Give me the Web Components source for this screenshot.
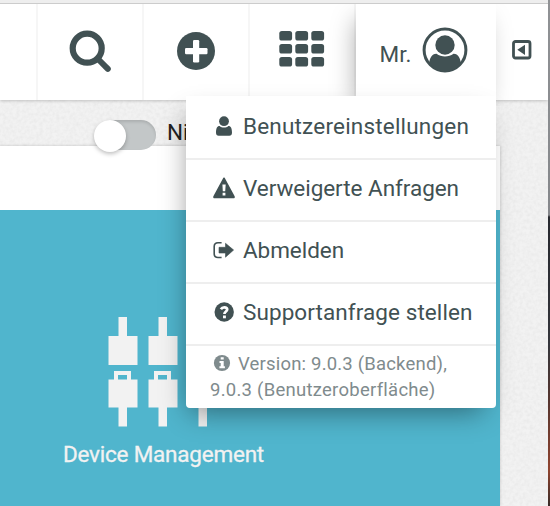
<!DOCTYPE html>
<html lang="de">
<head>
<meta charset="utf-8">
<title>Benutzermenü</title>
<style>
html, body { margin: 0; width: 550px; height: 506px; overflow: hidden; }
body { font-family: Roboto, "Noto Sans", sans-serif; color: #415153; }
</style>
</head>
<body>
<app-shell></app-shell>
<script>
const define = (name, html, ready) => {
  const template = document.createElement('template');
  template.innerHTML = html;
  customElements.define(name, class extends HTMLElement {
    constructor() {
      super();
      this.attachShadow({ mode: 'open' }).append(template.content.cloneNode(true));
    }
    connectedCallback() { if (ready) ready(this); }
  });
};

const icons = {
  search: ['0 0 44 44', '<circle cx="18.2" cy="18.2" r="14.5" fill="none" stroke="currentColor" stroke-width="6.2"/><path d="M29 29L38.8 38.8" stroke="currentColor" stroke-width="6" stroke-linecap="round"/>'],
  plus: ['0 0 38 38', '<circle cx="19" cy="19" r="19" fill="currentColor"/><rect x="8" y="16" width="22.500" height="6.200" rx="1.200" fill="#fff"/><rect x="16" y="8" width="6.200" height="22.500" rx="1.200" fill="#fff"/>'],
  grid: ['0 0 46 36', [0, 16, 32].map(x => [0, 13, 26].map(y => `<rect x="${x + .3}" y="${y}" width="12.800" height="9.500" rx="2.600" fill="currentColor"/>`).join('')).join('')],
  avatar: ['0 0 46 46', '<circle cx="23" cy="23" r="20.900" fill="none" stroke="currentColor" stroke-width="3"/><circle cx="23" cy="18" r="9.700" fill="currentColor"/><path d="M7 37C7.500 31 10 26.500 14.500 26.700C19.500 30.300 26.500 30.300 31.500 26.700C36 26.500 38.500 31 39 37A21 21 0 0 1 7 37Z" fill="currentColor"/>'],
  collapse: ['0 0 20 20', '<rect x="1.500" y="1.500" width="16.500" height="16.500" rx="2" fill="none" stroke="currentColor" stroke-width="2.800"/><path d="M13 4.700V15L5.300 9.800Z" fill="currentColor"/>'],
  user: ['0 0 24 24', '<circle cx="12" cy="7.200" r="4.900" fill="currentColor"/><path d="M7.600 11.900C9.800 13.900 14.200 13.900 16.400 11.900C19 11.900 20 14.500 20 18.500C20 20.600 19 21.700 17.300 21.700H6.700C5 21.700 4 20.600 4 18.500C4 14.500 5 11.900 7.600 11.900Z" fill="currentColor"/>'],
  warning: ['0 0 24 24', '<path d="M12 2.200L22 20.600V21.500H2V20.600Z" fill="currentColor" stroke="currentColor" stroke-width="1.500" stroke-linejoin="round"/><path d="M10.400 8.500H13.700L13.200 15.300H10.800ZM10.600 16.700H13.400V19.500H10.600Z" fill="#fff"/>'],
  exit: ['0 0 24 24', '<path d="M9.600 4.700H6Q2.200 4.700 2.200 8.500V15.700Q2.200 19.500 6 19.500H9.600" fill="none" stroke="currentColor" stroke-width="1.600"/><path d="M7 9.300H13.500V5.300L21.600 12L13.500 19.200V15H7Z" fill="currentColor" stroke="currentColor" stroke-width=".6" stroke-linejoin="round"/>'],
  help: ['0 0 24 24', '<circle cx="12.200" cy="12" r="9.700" fill="currentColor"/><path d="M8.900 9.200Q10 7.300 12.300 7.300Q15.200 7.300 15.200 9.500C15.200 11.500 12.400 11.500 12.400 14.100" fill="none" stroke="#fff" stroke-width="2.700"/><path d="M11 15.500h2.900v2.800H11z" fill="#fff"/>'],
  info: ['0 0 18 18', '<circle cx="9" cy="9" r="8.100" fill="currentColor"/><path d="M7.700 3.200h3v2.400h-3zM6.500 7h4.200v5.300h1.200v2H6.400v-2h1.300V9H6.500z" fill="#fff"/>'],
  device: ['0 0 110 110', [0, 40, 80].map(x => `<g transform="translate(${x})"><path d="M10.500 0h8.500v19h10.500v29H.5V19h10z"/><path fill-rule="evenodd" d="M6 54h17v8.500h6.500V90.500H19V109.500h-8.500V90.500H.5V62.500H6zM10 58v4.500h9V58z"/></g>`).join('')]
};

define('ui-icon', `<style>:host{display:block;flex:none}svg{display:block;width:100%;height:100%;fill:currentColor}</style><svg></svg>`, el => {
  const icon = icons[el.getAttribute('name')];
  if (!icon) return;
  const svg = el.shadowRoot.querySelector('svg');
  svg.setAttribute('viewBox', icon[0]);
  svg.innerHTML = icon[1];
});

/* One line of text, tracked so that it spans the given measure. */
define('tracked-text', `<style>:host{display:block;white-space:nowrap}span{display:inline-block}</style><span><slot></slot></span>`, el => {
  const span = el.shadowRoot.querySelector('span');
  const fit = () => {
    span.style.letterSpacing = '0px';
    const gap = Number(el.getAttribute('measure')) - span.getBoundingClientRect().width;
    span.style.letterSpacing = gap / el.textContent.length + 'px';
  };
  fit();
  document.fonts.ready.then(fit);
});

define('header-cell', `<style>
:host{display:flex;box-sizing:border-box;height:96px;border-right:2px solid #f6f6f6;background:#fff;align-items:center;justify-content:center;flex:none}
:host([active]){border:0;box-shadow:-5px 10px 24px -6px rgba(0,0,0,.36);position:relative}
:host([last]){border:0}
</style><slot></slot>`);

define('toggle-switch', `<style>
:host{display:flex;align-items:center;box-sizing:border-box;width:60px;height:30px;border-radius:15px;background:#c3c7c8;box-shadow:inset 0 2px 3px rgba(0,0,0,.12);flex:none}
i{width:32px;height:32px;border-radius:50%;background:#fff;margin:2px 0 0 -2px;box-shadow:0 2px 4px rgba(0,0,0,.25)}
</style><i></i>`);

define('menu-item', `<style>
:host{display:flex;box-sizing:border-box;height:62px;padding:15px 0 0 26px;gap:7px;border-top:2px solid #eee;font-size:22.500px;line-height:26px}
:host([first]){border-top:0;padding-top:17px}
ui-icon{width:24px;height:24px;margin-top:1px}
</style><ui-icon></ui-icon><slot></slot>`, el => {
  const old = el.shadowRoot.querySelector('ui-icon');
  const icon = document.createElement('ui-icon');
  icon.setAttribute('name', el.getAttribute('icon'));
  old.replaceWith(icon);
});

define('version-note', `<style>
:host{display:block;box-sizing:border-box;height:64px;border-top:2px solid #eee;padding:5px 0 0 24px;font-size:18.500px;line-height:26px;color:#7f8b8d}
div{display:flex;gap:7px;padding-left:3px}
ui-icon{width:18px;height:18px;margin-top:3px}
</style><div><ui-icon name="info"></ui-icon><slot name="backend"></slot></div><slot name="frontend"></slot>`);

define('user-menu', `<style>
:host{display:block;width:310px;height:312px;background:#fff;border-radius:0 0 4px 4px;box-shadow:-5px 12px 26px -8px rgba(0,0,0,.42)}
</style>
<menu-item first icon="user"><tracked-text measure="226">Benutzereinstellungen</tracked-text></menu-item>
<menu-item icon="warning"><tracked-text measure="216">Verweigerte Anfragen</tracked-text></menu-item>
<menu-item icon="exit"><tracked-text measure="101">Abmelden</tracked-text></menu-item>
<menu-item icon="help"><tracked-text measure="229.500">Supportanfrage stellen</tracked-text></menu-item>
<version-note><tracked-text slot="backend" measure="209">Version: 9.0.3 (Backend),</tracked-text><tracked-text slot="frontend" measure="225">9.0.3 (Benutzeroberfläche)</tracked-text></version-note>`);

define('device-tile', `<style>
:host{display:block;box-sizing:border-box;height:296px;background:#50b5cd;color:#f2f2f2;padding:107px 0 0 63px;font-size:22.500px;line-height:26px}
ui-icon{width:110px;height:110px;margin:0 0 14px 45px}
tracked-text{-webkit-text-stroke:.3px currentColor}
</style><ui-icon name="device"></ui-icon><tracked-text measure="201">Device Management</tracked-text>`);

define('app-shell', `<style>
:host{display:grid;grid-template-columns:548px 2px;width:550px;height:506px;position:relative;overflow:hidden}
main{height:506px;overflow:hidden;background:#f2f2f2 url("data:image/svg+xml,%3Csvg xmlns='http://www.w3.org/2000/svg' width='200' height='200'%3E%3Cfilter id='n'%3E%3CfeTurbulence type='fractalNoise' baseFrequency='.3' numOctaves='2' stitchTiles='stitch'/%3E%3CfeColorMatrix values='0 0 0 0 0 0 0 0 0 0 0 0 0 0 0 .06 0 0 0 -.02'/%3E%3C/filter%3E%3Crect width='200' height='200' filter='url(%23n)'/%3E%3C/svg%3E")}
aside{background:linear-gradient(#909295 0,#85878b 215px,#27292f 217px,#34353b 345px,#55352f 400px,#90442f 470px,#382a27 506px)}
.edge{height:3px;background:#eee;border-bottom:1px solid #ccc}
header{display:flex;height:96px;background:#fff;box-shadow:0 1px 3px rgba(0,0,0,.2);position:relative;clip-path:inset(0 0 -6px 0)}
.s{width:44px;height:44px;margin:0 0 0 2px}.p{width:38px;height:38px;margin-top:-3px}.g{width:46px;height:36px;margin:-7px 0 0 -1px}
.a{width:46px;height:46px;margin:-4px 5px 0 0}.c{width:20px;height:20px;margin-top:-4px}
.mr{font-size:22.500px;line-height:26px;margin:4px 10px 0 0}
.switch{display:flex;height:46px;box-sizing:border-box;padding:20px 0 0 96px;gap:11px;color:#222;font-size:22.500px;line-height:24px;position:relative;z-index:1}
.panel{width:500px;box-shadow:0 0 3px rgba(0,0,0,.2);background:#fff}
.blank{height:64px}
user-menu{position:absolute;left:186px;top:96px;z-index:3}
</style>
<main><div class="edge"></div>
<header>
<header-cell style="width:38px"></header-cell>
<header-cell style="width:106px"><ui-icon class="s" name="search"></ui-icon></header-cell>
<header-cell style="width:106px"><ui-icon class="p" name="plus"></ui-icon></header-cell>
<header-cell style="width:106px"><ui-icon class="g" name="grid"></ui-icon></header-cell>
<header-cell active style="width:140px"><tracked-text class="mr" measure="32">Mr.</tracked-text><ui-icon class="a" name="avatar"></ui-icon></header-cell>
<header-cell last style="width:52px"><ui-icon class="c" name="collapse"></ui-icon></header-cell>
</header>
<div class="switch"><toggle-switch></toggle-switch><span>Ni</span></div>
<div class="panel"><div class="blank"></div><device-tile></device-tile></div>
</main><aside></aside><user-menu></user-menu>`);
</script>
</body>
</html>
